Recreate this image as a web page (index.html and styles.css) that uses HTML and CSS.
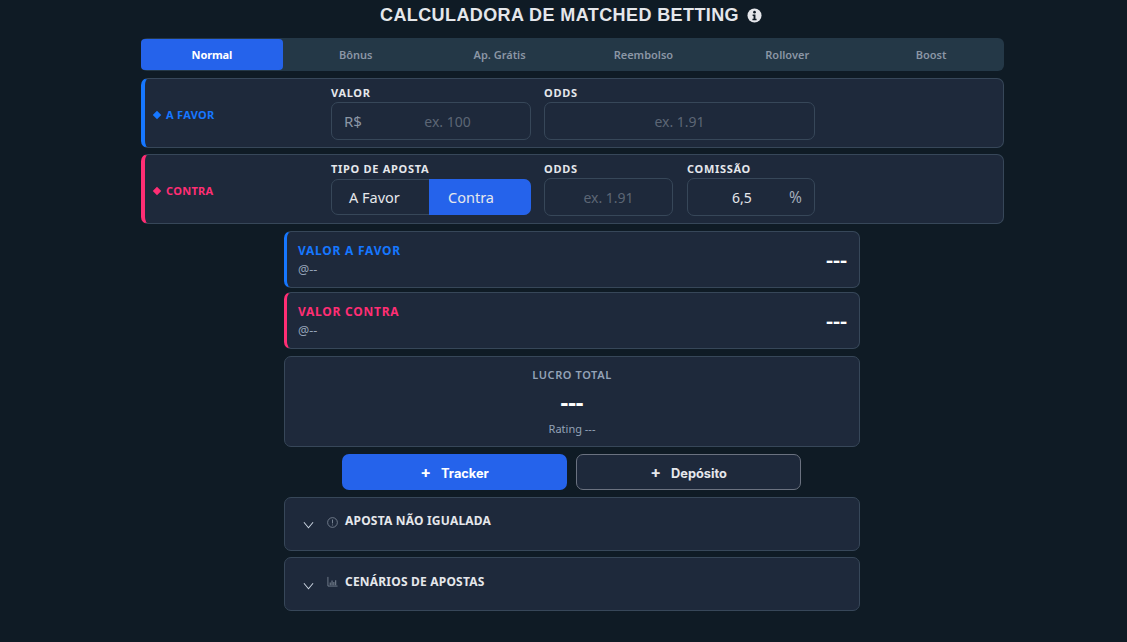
FILE: index.html
```html
<!DOCTYPE html>
<html lang="pt-BR">
<head>
<meta charset="utf-8">
<title>Calculadora de Matched Betting</title>
<link rel="stylesheet" href="styles.css">
</head>
<body>
<main class="page">
  <h1 class="title">CALCULADORA DE MATCHED BETTING
    <svg class="info" viewBox="0 0 16 16" aria-hidden="true"><circle cx="8" cy="8" r="7.500" fill="#e5e7eb"/><circle cx="8" cy="4.400" r="1.400" fill="#0f1b25"/><path d="M6 7h3v4.400h1.200V13H5.800v-1.600H7V8.500H6z" fill="#0f1b25"/></svg>
  </h1>
  <nav class="tabs">
    <button class="tab active">Normal</button>
    <button class="tab">Bônus</button>
    <button class="tab">Ap. Grátis</button>
    <button class="tab">Reembolso</button>
    <button class="tab">Rollover</button>
    <button class="tab">Boost</button>
  </nav>
  <section class="card bet bet-back">
    <div class="bet-name back"><span class="diamond"></span>A FAVOR</div>
    <div class="fields">
      <div class="field w-200">
        <label class="label">VALOR</label>
        <div class="input-box"><span class="prefix">R$</span><input class="input" placeholder="ex. 100"></div>
      </div>
      <div class="field w-271">
        <label class="label">ODDS</label>
        <div class="input-box"><input class="input" placeholder="ex. 1.91"></div>
      </div>
    </div>
  </section>
  <section class="card bet bet-lay">
    <div class="bet-name lay"><span class="diamond"></span>CONTRA</div>
    <div class="fields">
      <div class="field w-200">
        <label class="label">TIPO DE APOSTA</label>
        <div class="toggle"><span class="toggle-opt">A Favor</span><span class="toggle-opt on">Contra</span></div>
      </div>
      <div class="field w-129">
        <label class="label">ODDS</label>
        <div class="input-box"><input class="input" placeholder="ex. 1.91"></div>
      </div>
      <div class="field w-128">
        <label class="label">COMISSÃO</label>
        <div class="input-box"><input class="input input-suffixed" value="6,5"><span class="suffix">%</span></div>
      </div>
    </div>
  </section>
  <div class="results">
    <section class="card result result-back">
      <div><div class="result-title back">VALOR A FAVOR</div><div class="result-odds">@--</div></div>
      <div class="result-value">---</div>
    </section>
    <section class="card result result-lay">
      <div><div class="result-title lay">VALOR CONTRA</div><div class="result-odds">@--</div></div>
      <div class="result-value">---</div>
    </section>
    <section class="card profit">
      <div class="profit-label">LUCRO TOTAL</div>
      <div class="profit-value">---</div>
      <div class="profit-rating">Rating ---</div>
    </section>
    <div class="actions">
      <button class="action primary"><span class="plus">+</span>Tracker</button>
      <button class="action outline"><span class="plus">+</span>Depósito</button>
    </div>
    <section class="card accordion acc-first">
      <svg class="chev" viewBox="0 0 12 8" aria-hidden="true"><path d="M1 1l5 6 5-6" fill="none" stroke="#cbd5e1" stroke-width="1.100"/></svg>
      <svg class="acc-icon" viewBox="0 0 12 12" aria-hidden="true"><circle cx="6" cy="6" r="5.300" fill="none" stroke="#8b96a5" stroke-width=".8"/><path d="M6 2.800v4.200M6 8.200v1" stroke="#8b96a5" stroke-width=".9"/></svg>
      <span class="acc-title">APOSTA NÃO IGUALADA</span>
    </section>
    <section class="card accordion">
      <svg class="chev" viewBox="0 0 12 8" aria-hidden="true"><path d="M1 1l5 6 5-6" fill="none" stroke="#cbd5e1" stroke-width="1.100"/></svg>
      <svg class="acc-icon" viewBox="0 0 12 12" aria-hidden="true"><path d="M1 1v10h10.500" fill="none" stroke="#7d8896" stroke-width=".9"/><path d="M3.500 10V7M5.500 10V5M7.500 10V6.500M9.500 10V4.500" stroke="#7d8896" stroke-width="1.100"/></svg>
      <span class="acc-title">CENÁRIOS DE APOSTAS</span>
    </section>
  </div>
</main>
</body>
</html>
```
FILE: styles.css
```css
* { box-sizing: border-box; }
html, body { margin: 0; height: 100%; }
body {
  background: #0f1b25;
  color: #e5e7eb;
  font-family: "Noto Sans", sans-serif;
  overflow: hidden;
}
.page { width: 863px; margin-left: 141px; display: flex; flex-direction: column; }
.title {
  margin: 0;
  height: 38px;
  display: flex;
  align-items: center;
  justify-content: center;
  gap: 8px;
  padding: 0 3px 7px 0;
  font: 700 18px "Liberation Sans", sans-serif;
  letter-spacing: .4px;
  color: #e5e7eb;
}
.info { width: 15px; height: 15px; }
.tabs {
  display: flex;
  gap: 2px;
  height: 33px;
  padding-right: 2px;
  background: #243847;
  border-radius: 6px;
  margin-bottom: 7px;
}
.tab {
  flex: 1;
  border: 0;
  background: none;
  border-radius: 4px;
  margin: 1px 0;
  font: 600 11px "Noto Sans", sans-serif;
  color: #8b96a5;
}
.tab.active { background: #2563eb; color: #fff; font-weight: 700; letter-spacing: -.1px; }
.card {
  background: #1e293b;
  border: 1px solid #374759;
  border-radius: 7px;
}
.bet {
  height: 70px;
  display: flex;
  align-items: stretch;
  border-left-width: 4px;
  margin-bottom: 6px;
}
.bet-back { border-left-color: #1677ff; }
.bet-lay { border-left-color: #ff2e74; }
.bet-name {
  width: 186px;
  padding: 3px 0 0 8px;
  align-self: center;
  display: flex;
  align-items: center;
  gap: 6px;
  font-size: 11px;
  font-weight: 700;
  letter-spacing: .3px;
}
.diamond { width: 6px; height: 6px; margin-left: 1px; background: currentColor; transform: rotate(45deg); }
.back { color: #1677ff; }
.lay { color: #ff2e74; }
.fields { display: flex; gap: 13px; padding-top: 5px; }
.field { display: flex; flex-direction: column; }
.w-200 { width: 200px; }
.w-271 { width: 271px; }
.w-129 { width: 129px; }
.w-128 { width: 128px; margin-left: 1px; }
.label {
  font-size: 11px;
  font-weight: 700;
  line-height: 17px;
  margin-bottom: 1px;
  letter-spacing: .7px;
  color: #e5e7eb;
}
.input-box {
  height: 38px;
  display: flex;
  align-items: center;
  border: 1px solid #374759;
  border-radius: 7px;
}
.prefix { width: 33px; padding-left: 12px; font-size: 15px; color: #8b96a5; flex: none; }
.suffix { width: 25px; flex: none; font-size: 15.500px; color: #a3adba; }
.input {
  flex: 1;
  min-width: 0;
  width: 100%;
  height: 100%;
  padding: 0;
  border: 0;
  outline: 0;
  background: none;
  text-align: center;
  font: 14px "Noto Sans", sans-serif;
  color: #e5e7eb;
}
.input-suffixed { padding-left: 7px; }
.input::placeholder { color: #5c6675; opacity: 1; }
.toggle {
  height: 36px;
  margin-top: 1px;
  display: flex;
  border: 1px solid #374759;
  border-radius: 7px;
}
.toggle-opt { display: flex; align-items: center; padding-left: 17px; font-size: 14.500px; color: #e5e7eb; width: 97px; }
.toggle-opt.on {
  flex: 1;
  margin: -1px -1px -1px 0;
  background: #2563eb;
  border-radius: 0 7px 7px 0;
  padding-left: 19px;
}
.results { width: 576px; margin-left: 143px; display: flex; flex-direction: column; }
.result {
  height: 57px;
  margin-top: 1px;
  margin-bottom: 3px;
  padding: 1px 12px 0 11px;
  display: flex;
  align-items: center;
  justify-content: space-between;
  border-left-width: 3px;
}
.result-back { border-left-color: #1677ff; }
.result-lay { border-left-color: #ff2e74; margin-bottom: 7px; }
.result-title { font-size: 12px; font-weight: 700; letter-spacing: .75px; line-height: 18px; }
.result-odds { font-size: 12.500px; color: #94a3b8; line-height: 17px; margin-top: 1px; }
.result-value { font-size: 22px; font-weight: 600; color: #fff; line-height: 24px; margin-bottom: 2px; }
.profit { height: 91px; display: flex; flex-direction: column; align-items: center; margin-bottom: 7px; }
.profit-label { font-size: 11px; font-weight: 600; letter-spacing: .6px; color: #94a3b8; margin-top: 10px; line-height: 16px; }
.profit-value { font-size: 24px; font-weight: 700; color: #fff; line-height: 30px; margin-top: 4px; }
.profit-rating { font-size: 11px; color: #94a3b8; line-height: 16px; margin-top: 4px; }
.actions { display: flex; gap: 9px; padding-left: 58px; margin-bottom: 7px; }
.action {
  width: 225px;
  height: 36px;
  border-radius: 7px;
  font: 700 12.800px "Inter", sans-serif;
}
.primary { background: #2563eb; border: 0; color: #fff; }
.outline { background: #1e293b; border: 1px solid #6b7280; color: #e5e7eb; }
.plus { margin-right: 10px; font-size: 16px; }
.accordion {
  height: 54px;
  margin-bottom: 6px;
  padding: 0 0 0 18px;
  display: flex;
  align-items: center;
}
.acc-first { padding-bottom: 2px; }
.chev { width: 11px; height: 8px; flex: none; margin-top: 3px; }
.acc-icon { width: 11px; height: 11px; flex: none; margin: 0 7px 6px 13px; }
.acc-first .acc-icon { margin-bottom: 2px; }
.acc-title { font-size: 12px; font-weight: 700; color: #e5e7eb; margin-bottom: 6px; letter-spacing: .2px; }
```
